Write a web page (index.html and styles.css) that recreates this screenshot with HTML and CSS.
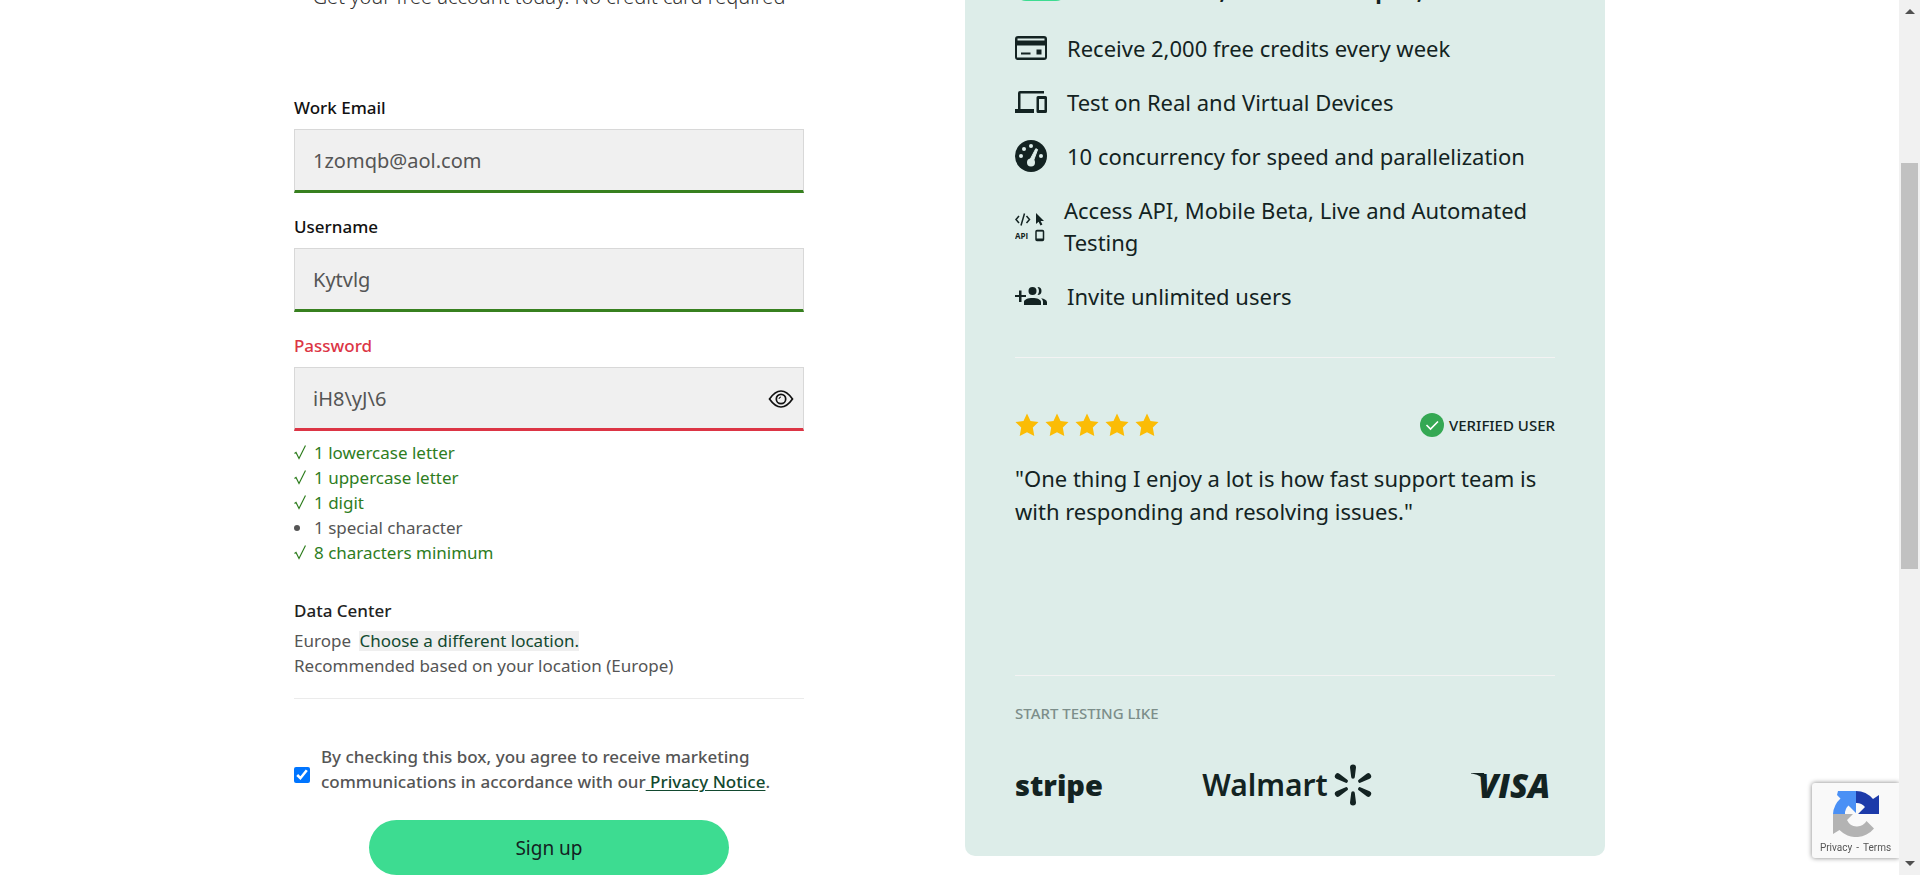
FILE: index.html
```
<!DOCTYPE html>
<html lang="en">
<head>
<meta charset="utf-8">
<title>Sign up</title>
<link rel="stylesheet" href="styles.css">
</head>
<body>
<div class="window">
  <div class="viewport">
    <main class="page">
      <section class="signup">
        <p class="intro">Get your free account today. No credit card required</p>
        <form class="form">
          <div class="field">
            <label class="label" for="email">Work Email</label>
            <input class="input" id="email" type="text" value="1zomqb@aol.com">
          </div>
          <div class="field">
            <label class="label" for="username">Username</label>
            <input class="input" id="username" type="text" value="Kytvlg">
          </div>
          <div class="field invalid">
            <label class="label" for="password">Password</label>
            <div class="password-box">
              <input class="input" id="password" type="text" value="iH8\yJ\6">
              <button class="reveal" type="button" aria-label="Hide password">
                <svg width="26" height="18" viewBox="0 0 26 18" fill="none" stroke="#111" stroke-width="1.700"><path d="M1.500 9C5 4 8.500 1 13 1S21 4 24.500 9C21 14 17.500 17 13 17S5 14 1.500 9Z"/><circle cx="13" cy="9" r="4.700"/><path d="M11 9a2 2 0 0 1 2-2" stroke-width="1"/></svg>
              </button>
            </div>
          </div>
          <ul class="rules">
            <li class="rule met"><svg class="tick" viewBox="0 0 12 15"><path d="M.5 8.500 2 7.500 5 13.500 11.500.5"/></svg>1 lowercase letter</li>
            <li class="rule met"><svg class="tick" viewBox="0 0 12 15"><path d="M.5 8.500 2 7.500 5 13.500 11.500.5"/></svg>1 uppercase letter</li>
            <li class="rule met"><svg class="tick" viewBox="0 0 12 15"><path d="M.5 8.500 2 7.500 5 13.500 11.500.5"/></svg>1 digit</li>
            <li class="rule"><span class="dot"></span>1 special character</li>
            <li class="rule met"><svg class="tick" viewBox="0 0 12 15"><path d="M.5 8.500 2 7.500 5 13.500 11.500.5"/></svg>8 characters minimum</li>
          </ul>
          <div class="center">
            <h2 class="center-title">Data Center</h2>
            <p class="center-line">Europe <button class="location" type="button">Choose a different location.</button></p>
            <p class="center-line">Recommended based on your location (Europe)</p>
          </div>
          <div class="consent">
            <input class="checkbox" id="consent" type="checkbox" checked>
            <label class="consent-text" for="consent">By checking this box, you agree to receive marketing communications in accordance with our<a class="link" href="#"> Privacy Notice</a>.</label>
          </div>
          <button class="submit" type="submit">Sign up</button>
        </form>
      </section>

      <aside class="card">
        <ul class="features">
          <li class="feature lead"><span class="badge"></span><strong>Test for free, all features open,</strong></li>
          <li class="feature">
            <svg class="icon" viewBox="0 0 32 32"><path fill-rule="evenodd" d="M3 4h26a3 3 0 0 1 3 3v18a3 3 0 0 1-3 3H3a3 3 0 0 1-3-3V7a3 3 0 0 1 3-3ZM2.500 6.500V8.500H29.500V6.500ZM2 13.500V25.500H30V13.500ZM6 20.500h9.500v2H6ZM21.500 17.500h5v5h-5Z"/></svg>
            Receive 2,000 free credits every week
          </li>
          <li class="feature">
            <svg class="icon" viewBox="0 0 32 32"><path fill-rule="evenodd" d="M5 5h24v2.500H5.500V23H19v4H0v-4h3V7a2 2 0 0 1 2-2ZM23 10h7.500a1.500 1.500 0 0 1 1.500 1.500V25.500a1.500 1.500 0 0 1-1.500 1.500H23a1.500 1.500 0 0 1-1.500-1.500V11.500A1.500 1.500 0 0 1 23 10ZM24 13v11h5.500V13Z"/></svg>
            Test on Real and Virtual Devices
          </li>
          <li class="feature">
            <svg class="icon" viewBox="0 0 32 32"><circle cx="16" cy="16" r="16"/><g fill="#ddede9"><circle cx="6" cy="16" r="2"/><circle cx="9" cy="9" r="2"/><circle cx="16" cy="6" r="2"/><circle cx="26" cy="16" r="2"/><circle cx="16" cy="22.500" r="4"/><path d="M14.300 21 20.800 8.700 22.600 9.500 18 22Z" stroke="#ddede9" stroke-linejoin="round"/></g></svg>
            10 concurrency for speed and parallelization
          </li>
          <li class="feature tall">
            <svg class="icon" viewBox="0 0 32 32"><g fill="none" stroke="#132322" stroke-width="1.500"><path d="M4 6 1 9.500 4 13M11.500 6l3 3.500-3 3.500M9.500 3.500 6 15.500"/><rect x="21" y="20.500" width="7.500" height="10" rx="1"/></g><path d="M21 3v11l2.600-2.300 1.900 3.800 1.900-.9-1.800-3.600H29ZM21 28.500h7v2h-7ZM21 20h7v1.500h-7Z"/><text class="api" x="0" y="29">API</text></svg>
            Access API, Mobile Beta, Live and Automated Testing
          </li>
          <li class="feature">
            <svg class="icon" viewBox="0 0 32 32"><path d="M4 10.500h2.500V15H11v2H6.500v5H4v-5H0v-2h4ZM9 25v-3c0-2.500 4-4 8.500-4s8.500 1.500 8.500 4v3Z"/><circle cx="17.500" cy="11" r="4"/><path d="M22.500 7a4 4 0 1 1 0 8c2-2.500 2-5.500 0-8ZM26 18.200c3.500.6 6 2 6 4V25h-4v-3c0-1.500-.7-2.800-2-3.800Z"/></svg>
            Invite unlimited users
          </li>
        </ul>
        <div class="review">
          <div class="review-head">
            <div class="stars" role="img" aria-label="5 stars">
              <svg class="star" viewBox="0 0 24 24"><path d="M12 .5 15.500 8 23.500 9 17.800 14.600 19.300 23 12 19.200 4.700 23 6.200 14.600.5 9l8-1Z"/></svg>
              <svg class="star" viewBox="0 0 24 24"><path d="M12 .5 15.500 8 23.500 9 17.800 14.600 19.300 23 12 19.200 4.700 23 6.200 14.600.5 9l8-1Z"/></svg>
              <svg class="star" viewBox="0 0 24 24"><path d="M12 .5 15.500 8 23.500 9 17.800 14.600 19.300 23 12 19.200 4.700 23 6.200 14.600.5 9l8-1Z"/></svg>
              <svg class="star" viewBox="0 0 24 24"><path d="M12 .5 15.500 8 23.500 9 17.800 14.600 19.300 23 12 19.200 4.700 23 6.200 14.600.5 9l8-1Z"/></svg>
              <svg class="star" viewBox="0 0 24 24"><path d="M12 .5 15.500 8 23.500 9 17.800 14.600 19.300 23 12 19.200 4.700 23 6.200 14.600.5 9l8-1Z"/></svg>
            </div>
            <div class="verified">
              <svg width="24" height="24" viewBox="0 0 24 24"><circle cx="12" cy="12" r="12" fill="#34a853"/><path d="M6.500 12l4 4L18 8.500" fill="none" stroke="#fff" stroke-width="1.600"/></svg>
              VERIFIED USER
            </div>
          </div>
          <blockquote class="quote">"One thing I enjoy a lot is how fast support team is with responding and resolving issues."</blockquote>
        </div>
        <div class="brands">
          <h3 class="brands-title">START TESTING LIKE</h3>
          <div class="logos">
            <span class="stripe">stripe</span>
            <span class="walmart">Walmart
              <svg width="38" height="42" viewBox="0 0 38 42" fill="#132322"><g id="ray"><path d="M16 3.500a3 3 0 0 1 6 0L20.800 13a1.800 1.800 0 0 1-3.600 0Z"/></g><use href="#ray" transform="rotate(60 19 21)"/><use href="#ray" transform="rotate(120 19 21)"/><use href="#ray" transform="rotate(180 19 21)"/><use href="#ray" transform="rotate(240 19 21)"/><use href="#ray" transform="rotate(300 19 21)"/></svg>
            </span>
            <svg class="visa" width="84" height="30" viewBox="0 0 84 30"><path d="M0 3h13l2 8C11 6.500 5 4 0 3.600Z"/><text x="7" y="28">VISA</text></svg>
          </div>
        </div>
      </aside>
    </main>
    <div class="recaptcha">
      <svg width="46" height="46" viewBox="0 0 46 46"><path d="M0 23A23 23 0 0 1 7.500 7.500L4 4 5 0H23V22L15.500 14.500A11 11 0 0 0 12 23Z" fill="#4a90f5"/><path d="M23 0A23 23 0 0 1 40 8L46 4V23H25L32 16A11 11 0 0 0 23 12Z" fill="#1c3aa9"/><path d="M0 23H20L14 29A11 11 0 0 0 33.500 30L41 37.500A23 23 0 0 1 6.500 39L0 43Z" fill="#b3b3b3"/></svg>
      <span class="terms"><a href="#">Privacy</a> <span>-</span> <a href="#">Terms</a></span>
    </div>
  </div>
  <div class="scrollbar" aria-hidden="true">
    <svg class="arrow" viewBox="0 0 10 5"><path d="M0 5 5 0l5 5Z"/></svg>
    <div class="track"><div class="thumb"></div></div>
    <svg class="arrow" viewBox="0 0 10 5"><path d="M0 0l5 5 5-5Z"/></svg>
  </div>
</div>
</body>
</html>
```
FILE: styles.css
```
* { box-sizing: border-box; }
body { margin: 0; font-family: "Noto Sans", "Open Sans", sans-serif; color: #555; background: #fff; }
h2, h3, p, ul, blockquote { margin: 0; padding: 0; }
ul { list-style: none; }
button, input { font-family: inherit; }

.window { display: flex; height: 100vh; overflow: hidden; }
.viewport { flex: 1; overflow: hidden; }
.page { display: flex; justify-content: space-between; align-items: flex-start; gap: 32px; max-width: 1311px; margin: -21px auto 0; }

.signup { flex: 0 1 510px; min-width: 0; }
.intro { font-size: 20px; line-height: 36px; font-weight: 300; text-align: center; color: #333; }
.form { display: flex; flex-direction: column; padding-top: 79px; }
.field { display: flex; flex-direction: column; gap: 8px; margin-bottom: 20px; }
.label { font-size: 17px; line-height: 27px; font-weight: 500; color: #111; }
.input { width: 100%; height: 64px; padding: 0 18px; border: 1px solid #d8d8d8; border-bottom: 3px solid #37801f; border-radius: 0; background: #f0f0f0; font-size: 20px; color: #555; }
.invalid { margin-bottom: 9px; }
.invalid .label { color: #dc3545; }
.invalid .input { border-bottom-color: #dc3545; padding-right: 48px; }
.password-box { position: relative; display: flex; }
.reveal { position: absolute; right: 10px; top: 19px; display: flex; padding: 4px 0; border: 0; background: none; }

.rules { font-size: 17px; line-height: 25px; }
.rule { display: flex; align-items: center; gap: 8px; }
.met { color: #2e7d1e; }
.tick { width: 12px; height: 15px; fill: none; stroke: #2e7d1e; stroke-width: 1.2; }
.dot { width: 6px; height: 6px; margin-right: 6px; border-radius: 50%; background: #555; }

.center { padding: 33px 0 20px; border-bottom: 1px solid #ebebeb; font-size: 17px; line-height: 25px; }
.center-title { margin-bottom: 5px; font-size: 17px; font-weight: 500; color: #222; }
.location { margin-left: 4px; padding: 0; border: 0; background: #efefef; font-size: 17px; line-height: 20px; color: #12492f; }

.consent { display: flex; align-items: center; gap: 11px; margin-top: 45px; }
.checkbox { flex: none; width: 16px; height: 16px; margin: 11px 0 0; accent-color: #0075ff; }
.consent-text { font-size: 17px; line-height: 25px; font-weight: 500; }
.link { color: #12492f; text-decoration: underline; text-underline-offset: 2px; }
.submit { align-self: center; width: 360px; height: 55px; margin-top: 26px; border: 0; border-radius: 28px; background: #3ddc91; font-size: 19px; color: #132322; }

.card { flex: 0 1 640px; min-width: 0; padding: 0 50px 50px; border-radius: 10px; background: #ddede9; color: #132322; }
.features { display: flex; flex-direction: column; gap: 22px; padding-bottom: 45px; border-bottom: 1px solid #f3f3f3; }
.feature { display: flex; align-items: center; gap: 20px; font-size: 22px; line-height: 32px; }
.tall { gap: 17px; }
.lead { align-items: flex-end; height: 31px; padding-bottom: 4px; }
.badge { width: 52px; height: 22px; margin-bottom: 5px; border-radius: 11px; background: #3ddc91; }
.icon { flex: none; width: 32px; height: 32px; fill: #132322; }
.api { font: 700 8px "Open Sans", sans-serif; }

.review { padding: 55px 0 147px; border-bottom: 1px solid #f3f3f3; }
.review-head { display: flex; align-items: center; justify-content: space-between; }
.stars { display: flex; gap: 6px; }
.star { width: 24px; height: 24px; fill: #fbbc05; }
.verified { display: flex; align-items: center; gap: 5px; font-size: 15px; line-height: 24px; font-weight: 500; }
.quote { margin-top: 25px; font-size: 22px; line-height: 33px; }

.brands { padding-top: 25px; }
.brands-title { font-size: 15px; line-height: 24px; font-weight: 500; color: #7c8e8a; }
.logos { display: flex; align-items: center; justify-content: space-between; height: 42px; margin-top: 39px; }
.stripe { font: 800 29px/36px "Open Sans", sans-serif; }
.walmart { display: flex; align-items: center; gap: 6px; font-size: 30px; line-height: 42px; font-weight: 600; }
.visa { fill: #132322; font: italic 800 33px "Open Sans", sans-serif; }

.recaptcha { position: fixed; right: 21px; bottom: 17px; display: flex; flex-direction: column; align-items: center; gap: 4px; width: 87px; padding: 8px 0 4px; border-radius: 3px 0 0 3px; background: #f9f9f9; box-shadow: 0 0 5px #808080; clip-path: inset(-8px 0 -8px -8px); }
.terms { display: flex; gap: 4px; font: 10px/13px Roboto, sans-serif; color: #555; }
.terms a { color: #555; text-decoration: none; }

.scrollbar { display: flex; flex-direction: column; align-items: center; width: 21px; padding: 9px 0; background: #f1f1f1; }
.arrow { flex: none; width: 10px; height: 5px; fill: #505050; }
.track { flex: 1; width: 17px; padding: 149px 0; }
.thumb { height: 406px; background: #c1c1c1; }
```
